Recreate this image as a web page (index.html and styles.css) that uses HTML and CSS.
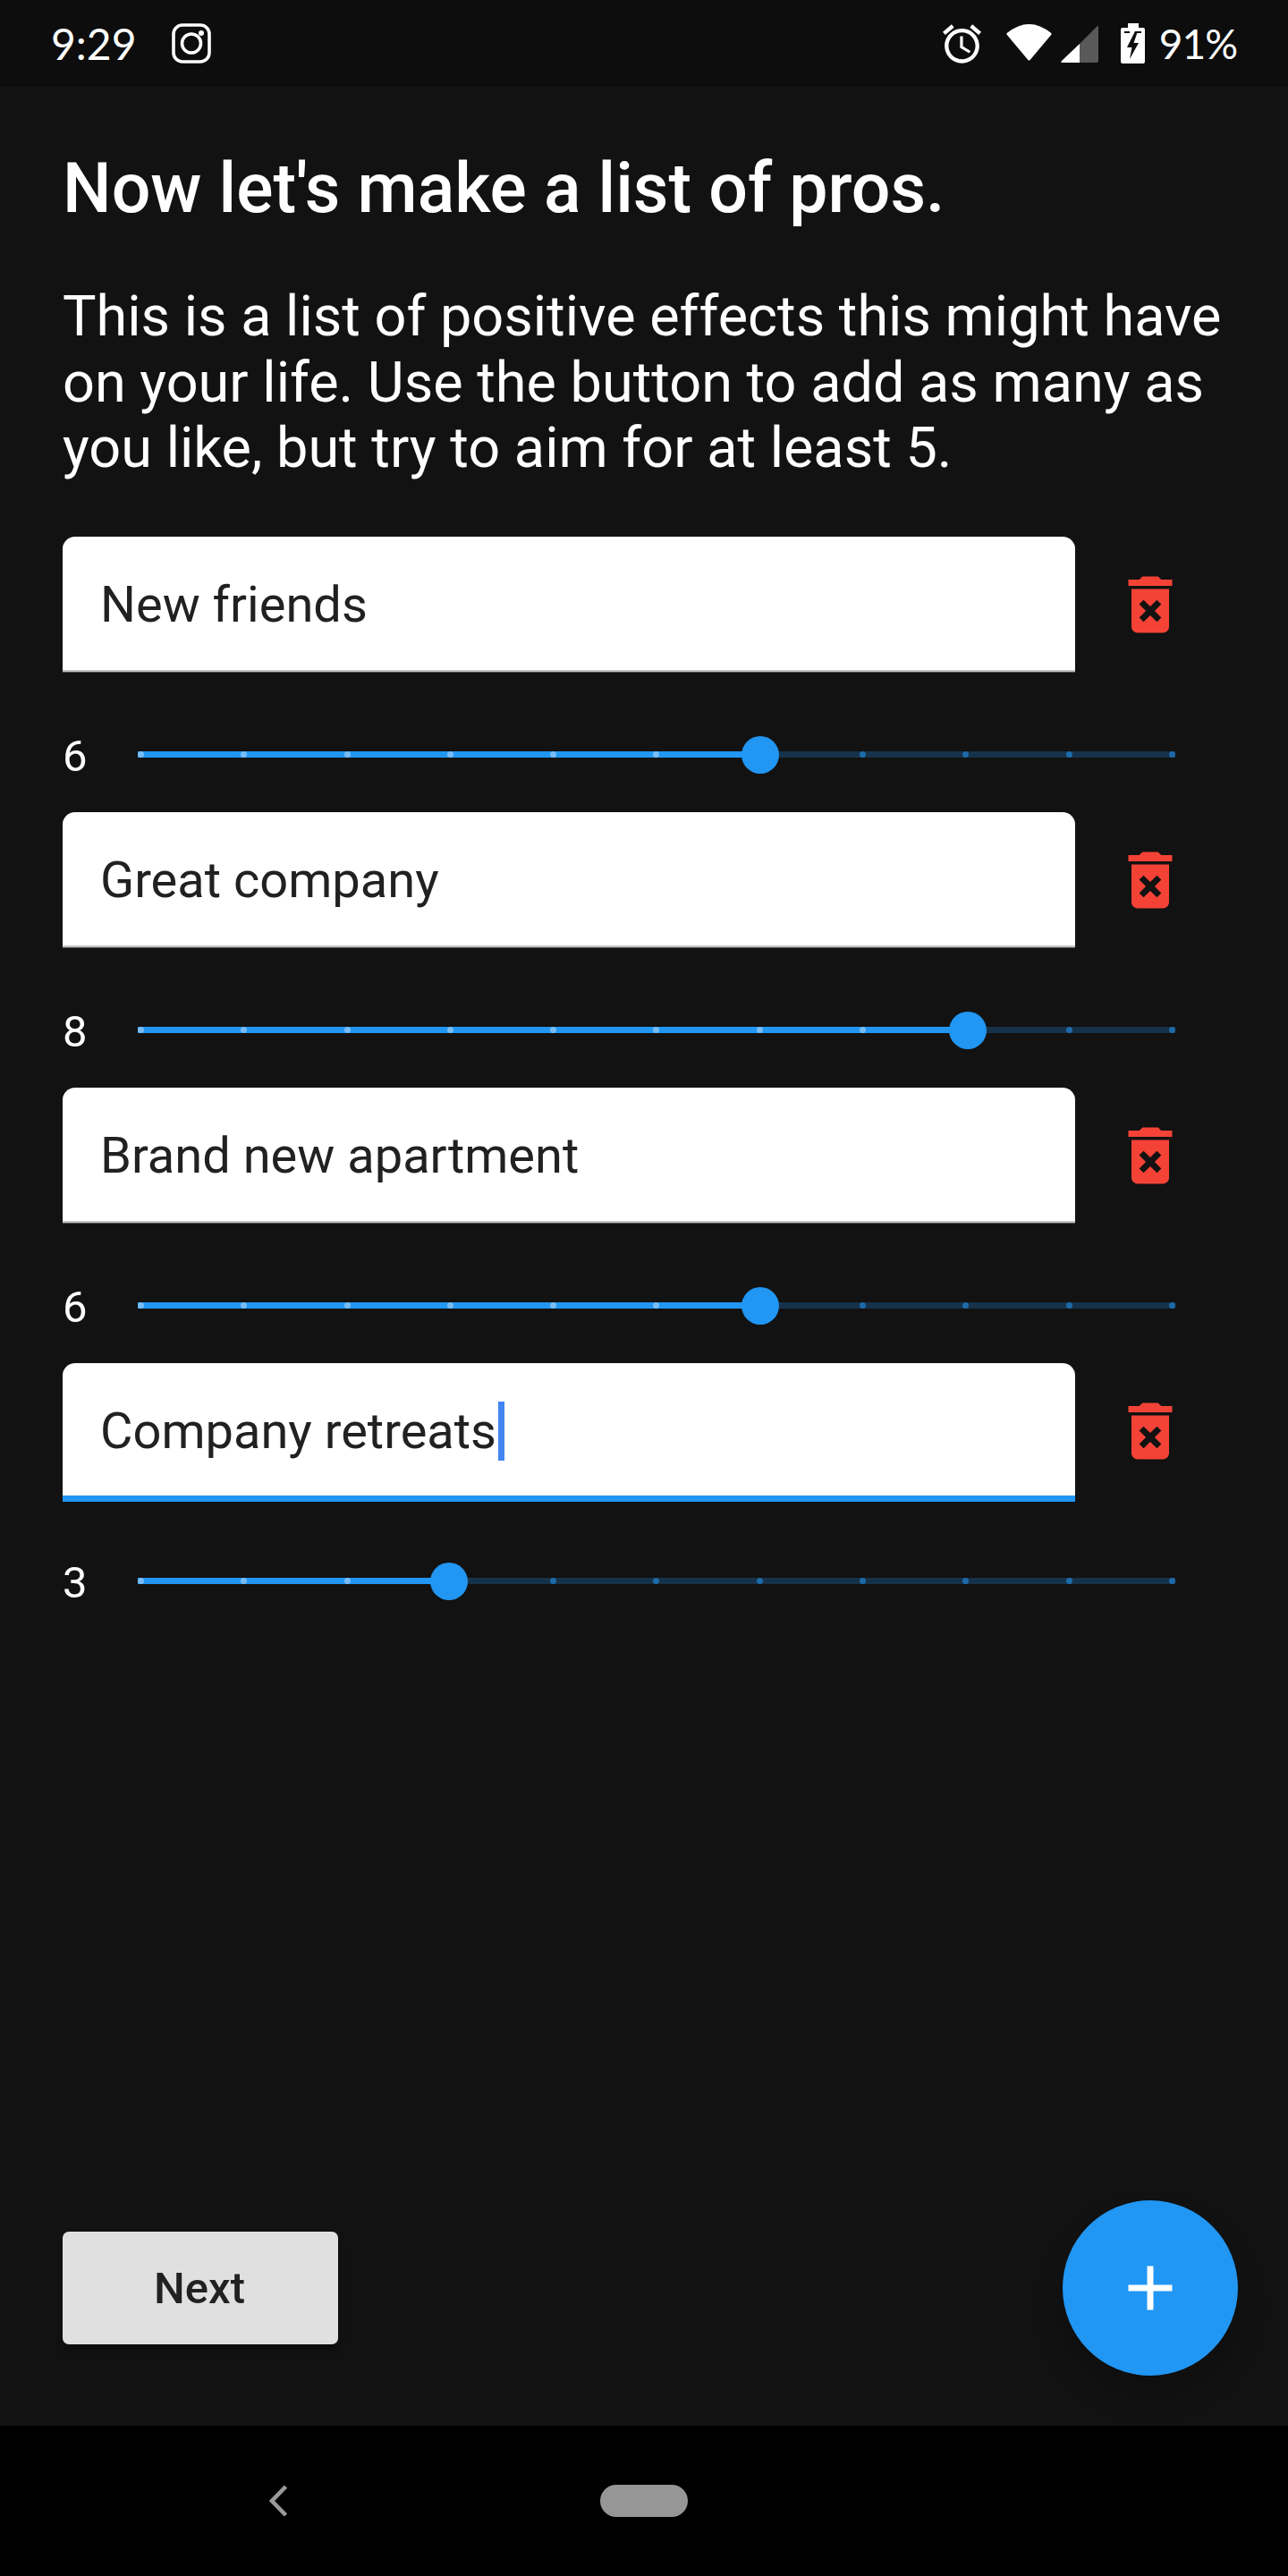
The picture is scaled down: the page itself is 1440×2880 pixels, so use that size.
FILE: index.html
```html
<!DOCTYPE html>
<html lang="en">
<head>
    <meta charset="UTF-8">
    <meta name="viewport" content="width=device-width, initial-scale=1.0">
    <title>List of pros</title>
    <link rel="stylesheet" href="styles.css">
</head>
<body>
    <div id="status">
        <div class="status-left">
            <span class="status-text">9:29</span>
            <svg class="ig" width="44" height="45" viewBox="0 0 44 45" fill="none" stroke="#fff" stroke-width="3.6">
                <rect x="2" y="2" width="40" height="41" rx="10"/>
                <circle cx="22" cy="22.5" r="10.5"/>
                <circle cx="33" cy="11" r="3" fill="#fff" stroke="none"/>
            </svg>
        </div>
        <div class="status-right">
            <svg width="43" height="44" viewBox="2 1.86 20 20.14" fill="#fff"><path d="M22 5.72l-4.6-3.86-1.29 1.53 4.6 3.86L22 5.72zM7.88 3.39L6.6 1.86 2 5.71l1.29 1.53 4.59-3.85zM12.5 8H11v6l4.75 2.85.75-1.23-4-2.37V8zM12 4c-4.97 0-9 4.03-9 9s4.03 9 9 9 9-4.03 9-9-4.03-9-9-9zm0 16c-3.87 0-7-3.13-7-7s3.13-7 7-7 7 3.13 7 7-3.13 7-7 7z"/></svg>
            <svg class="wifi" width="53" height="42" viewBox="0 0 53 42"><path d="M3 12Q26.5 -7 50 12L26.5 40Z" fill="#fff" stroke="#fff" stroke-width="3" stroke-linejoin="round"/></svg>
            <svg class="signal" width="42" height="42" viewBox="0 0 42 42">
                <path d="M21 21L41 1Q42 0 42 2V40Q42 42 40 42H21Z" fill="#595959"/>
                <path d="M21 21V42H2Q-1 42 1 40Z" fill="#fff"/>
            </svg>
            <svg class="battery" width="27" height="45" viewBox="0 0 27 45">
                <path d="M8 0H20V5H25Q27 5 27 7V43Q27 45 25 45H2Q0 45 0 43V7Q0 5 2 5H8Z" fill="#fff"/>
                <path d="M4 10H10M18 10H23" stroke="#0d0d0d" stroke-width="2"/>
                <path d="M16 9L7 27H12.500L10 40L20 22H14.500L19 9Z" fill="#0d0d0d"/>
            </svg>
            <span class="status-text pct">91%</span>
        </div>
    </div>

    <main id="content">
        <h1>Now let's make a list of pros.</h1>
        <p class="intro">This is a list of positive effects this might have on your life. Use the button to add as many as you like, but try to aim for at least 5.</p>

        <div class="item">
            <div class="item-top">
                <div class="field">New friends</div>
                <button class="del"><svg width="84" height="84" viewBox="0 0 24 24"><path d="M6 19c0 1.100.9 2 2 2h8c1.100 0 2-.9 2-2V7H6v12zm2.460-7.120l1.410-1.410L12 12.590l2.120-2.120 1.410 1.410L13.410 14l2.120 2.120-1.410 1.410L12 15.410l-2.120 2.120-1.410-1.410L10.590 14l-2.130-2.120zM15.500 4l-1-1h-5l-1 1H5v2h14V4z"/></svg></button>
            </div>
            <div class="item-slider">
                <span class="value">6</span>
                <div class="slider">
                    <div class="track"></div>
                    <div class="track-on" style="width: 60%"></div>
                    <div class="ticks">
                        <i class="on"></i><i class="on"></i><i class="on"></i><i class="on"></i><i class="on"></i><i class="on"></i><i></i><i></i><i></i><i></i><i></i>
                    </div>
                    <div class="thumb" style="left: 60%"></div>
                </div>
            </div>
        </div>

        <div class="item">
            <div class="item-top">
                <div class="field">Great company</div>
                <button class="del"><svg width="84" height="84" viewBox="0 0 24 24"><path d="M6 19c0 1.100.9 2 2 2h8c1.100 0 2-.9 2-2V7H6v12zm2.460-7.120l1.410-1.410L12 12.590l2.120-2.120 1.410 1.410L13.410 14l2.120 2.120-1.410 1.410L12 15.410l-2.120 2.120-1.410-1.410L10.590 14l-2.130-2.120zM15.500 4l-1-1h-5l-1 1H5v2h14V4z"/></svg></button>
            </div>
            <div class="item-slider">
                <span class="value">8</span>
                <div class="slider">
                    <div class="track"></div>
                    <div class="track-on" style="width: 80%"></div>
                    <div class="ticks">
                        <i class="on"></i><i class="on"></i><i class="on"></i><i class="on"></i><i class="on"></i><i class="on"></i><i class="on"></i><i class="on"></i><i></i><i></i><i></i>
                    </div>
                    <div class="thumb" style="left: 80%"></div>
                </div>
            </div>
        </div>

        <div class="item">
            <div class="item-top">
                <div class="field">Brand new apartment</div>
                <button class="del"><svg width="84" height="84" viewBox="0 0 24 24"><path d="M6 19c0 1.100.9 2 2 2h8c1.100 0 2-.9 2-2V7H6v12zm2.460-7.120l1.410-1.410L12 12.590l2.120-2.120 1.410 1.410L13.410 14l2.120 2.120-1.410 1.410L12 15.410l-2.120 2.120-1.410-1.410L10.590 14l-2.130-2.120zM15.500 4l-1-1h-5l-1 1H5v2h14V4z"/></svg></button>
            </div>
            <div class="item-slider">
                <span class="value">6</span>
                <div class="slider">
                    <div class="track"></div>
                    <div class="track-on" style="width: 60%"></div>
                    <div class="ticks">
                        <i class="on"></i><i class="on"></i><i class="on"></i><i class="on"></i><i class="on"></i><i class="on"></i><i></i><i></i><i></i><i></i><i></i>
                    </div>
                    <div class="thumb" style="left: 60%"></div>
                </div>
            </div>
        </div>

        <div class="item">
            <div class="item-top">
                <div class="field focused">Company retreats<span class="cursor"></span></div>
                <button class="del"><svg width="84" height="84" viewBox="0 0 24 24"><path d="M6 19c0 1.100.9 2 2 2h8c1.100 0 2-.9 2-2V7H6v12zm2.460-7.120l1.410-1.410L12 12.590l2.120-2.120 1.410 1.410L13.410 14l2.120 2.120-1.410 1.410L12 15.410l-2.120 2.120-1.410-1.410L10.590 14l-2.130-2.120zM15.500 4l-1-1h-5l-1 1H5v2h14V4z"/></svg></button>
            </div>
            <div class="item-slider">
                <span class="value">3</span>
                <div class="slider">
                    <div class="track"></div>
                    <div class="track-on" style="width: 30%"></div>
                    <div class="ticks">
                        <i class="on"></i><i class="on"></i><i class="on"></i><i class="on"></i><i></i><i></i><i></i><i></i><i></i><i></i><i></i>
                    </div>
                    <div class="thumb" style="left: 30%"></div>
                </div>
            </div>
        </div>

        <div class="actions">
            <button class="next">Next</button>
            <button class="fab"><svg width="84" height="84" viewBox="0 0 24 24" fill="#fff"><path d="M19 13h-6v6h-2v-6H5v-2h6V5h2v6h6v2z"/></svg></button>
        </div>
    </main>

    <div id="navbar">
        <svg class="back" width="20" height="34" viewBox="0 0 20 34" fill="none" stroke="#999" stroke-width="4.500"><path d="M18.500 1L3 17L18.500 33"/></svg>
        <div class="pill"></div>
    </div>
</body>
</html>
```

FILE: styles.css
```css
*{
    margin: 0;
    box-sizing: border-box;
}
:root{
    --fundo:#121212;
    --barra:#0d0d0d;
    --azul:#2196f3;
    --texto:#212121;
}
html, body{
    background-color: var(--fundo);
    height: 100%;
}
body{
    display: flex;
    flex-direction: column;
    font-family: Roboto, sans-serif;
    color: white;
}
button{
    border: none;
    padding: 0;
    font-family: inherit;
}

/* barra de status */
#status{
    height: 97px;
    flex: none;
    background-color: var(--barra);
    display: flex;
    justify-content: space-between;
    align-items: center;
    padding: 0 57px;
}
.status-left, .status-right{
    display: flex;
    align-items: center;
}
.status-text{
    font-family: Lato, sans-serif;
    font-size: 48px;
    line-height: 50px;
}
.ig{
    margin-left: 39px;
}
.wifi{
    margin-left: 27px;
    margin-top: -4px;
}
.signal{
    margin-left: 9px;
}
.battery{
    margin-left: 25px;
}
.pct{
    margin-left: 16px;
    font-size: 46px;
    letter-spacing: -1px;
}

/* conteudo */
#content{
    flex: auto;
    display: flex;
    flex-direction: column;
}
h1{
    font-size: 77px;
    font-weight: 500;
    line-height: 90px;
    padding: 69px 70px 0;
}
.intro{
    font-size: 63px;
    line-height: 73.500px;
    padding: 61px 70px 0;
    margin-bottom: 62.500px;
}
.item-top{
    display: flex;
    height: 152px;
    padding-left: 70px;
    padding-right: 70px;
}
.field{
    flex: auto;
    height: 151px;
    background-color: white;
    color: var(--texto);
    font-size: 56px;
    line-height: 66px;
    padding: 43px 42px 0;
    border-radius: 14px 14px 0 0;
    border-bottom: 2px solid #c4c4c4;
    box-shadow: 0 1px 0 #555;
}
.field.focused{
    height: 155px;
    border-bottom: 7px solid var(--azul);
    box-shadow: none;
}
.cursor{
    display: inline-block;
    width: 7px;
    height: 66px;
    margin-left: 2px;
    background-color: #4285f4;
    vertical-align: top;
}
.del{
    flex: none;
    width: 168px;
    background: none;
    display: flex;
    align-items: center;
    justify-content: center;
    fill: #f44336;
}
.item-slider{
    display: flex;
    align-items: center;
    height: 156px;
    padding: 71px 126px 43px 70px;
}
.value{
    width: 84px;
    font-size: 49px;
    line-height: 42px;
    position: relative;
    top: 2px;
}
.slider{
    position: relative;
    flex: auto;
    height: 42px;
}
.track, .track-on{
    position: absolute;
    left: 0;
    top: 17px;
    height: 7px;
}
.track{
    width: 100%;
    background-color: #16324b;
}
.track-on{
    background-color: var(--azul);
}
.ticks{
    position: absolute;
    left: 0;
    right: 0;
    top: 17px;
    display: flex;
    justify-content: space-between;
}
.ticks i{
    width: 7px;
    height: 7px;
    border-radius: 50%;
    background-color: #1e6aa8;
}
.ticks i.on{
    background-color: #78bcf7;
}
.thumb{
    position: absolute;
    top: 0;
    width: 42px;
    height: 42px;
    margin-left: -21px;
    border-radius: 50%;
    background-color: var(--azul);
}

/* botoes de baixo */
.actions{
    margin-top: auto;
    display: flex;
    justify-content: space-between;
    align-items: center;
    padding: 0 56px 56px 70px;
}
.next{
    width: 308px;
    height: 126px;
    padding-right: 2px;
    background-color: #e0e0e0;
    color: var(--texto);
    font-size: 49px;
    font-weight: 500;
    border-radius: 7px;
    box-shadow: 0 7px 10px rgba(0, 0, 0, 0.3);
}
.fab{
    width: 196px;
    height: 196px;
    border-radius: 50%;
    background-color: var(--azul);
    display: flex;
    align-items: center;
    justify-content: center;
    box-shadow: 0 21px 35px rgba(0, 0, 0, 0.2);
}

#navbar{
    height: 168px;
    flex: none;
    background-color: black;
    display: flex;
    align-items: center;
    padding-left: 301px;
}
.pill{
    width: 98px;
    height: 36px;
    margin-left: 350px;
    border-radius: 18px;
    background-color: #969696;
}
```
